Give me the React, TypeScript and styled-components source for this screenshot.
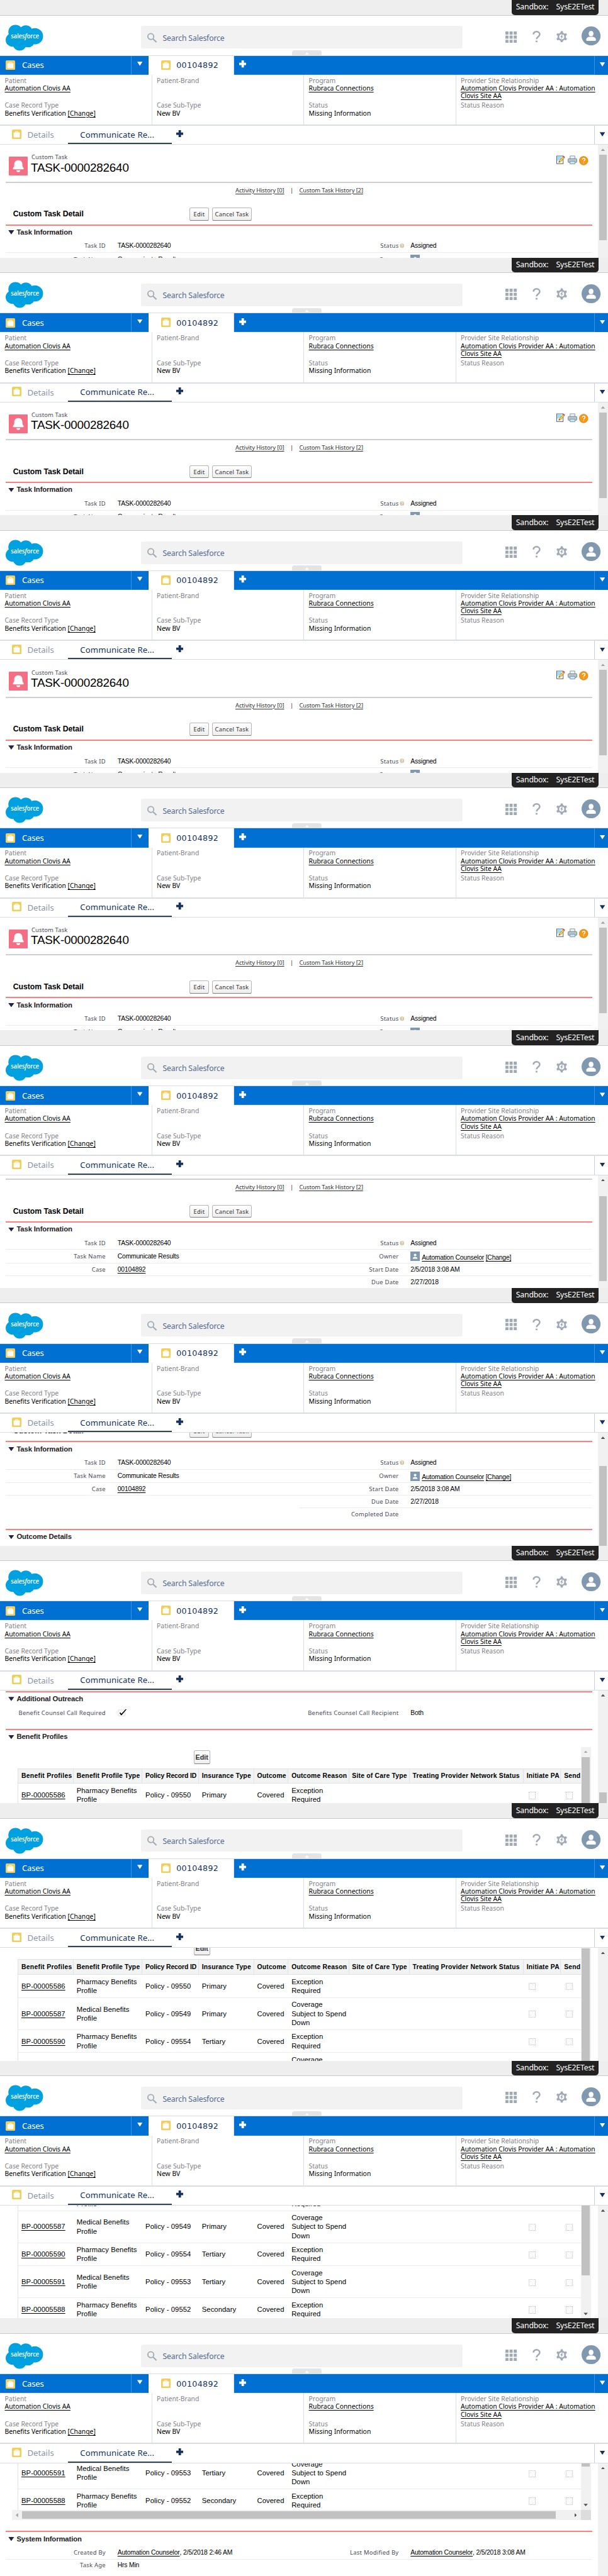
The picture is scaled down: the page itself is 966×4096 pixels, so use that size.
import React from 'react';
import styled, { createGlobalStyle } from 'styled-components';

const noto = '"Noto Sans", "Open Sans", sans-serif';
const arial = '"Liberation Sans", Arial, sans-serif';

const Global = createGlobalStyle`
  html, body { margin: 0; padding: 0; background: #fff; }
  * { box-sizing: border-box; }
`;

const Page = styled.main`
  width: 1024px;
  zoom: 0.94336;
  font-family: ${noto};
  color: #000;
  background: #fff;
`;

const Panel = styled.section`
  display: flex;
  flex-direction: column;
  height: 434.19px;
  overflow: hidden;
`;

/* ---------- sandbox strip ---------- */

const Strip = styled.div`
  flex: none;
  display: flex;
  justify-content: flex-end;
  height: 26px;
  padding-right: 16px;
  background: #eee;
  border-bottom: 1px solid #c9c9c9;
`;

const SandboxBadge = styled.div`
  display: flex;
  align-items: center;
  justify-content: space-between;
  width: 146px;
  height: 25px;
  padding: 0 7px;
  border-radius: 0 0 5px 5px;
  background: #222;
  color: #fff;
  font-size: 13px;
  letter-spacing: -0.2px;
  line-height: 24px;
`;

/* ---------- header ---------- */

const Header = styled.header`
  position: relative;
  flex: none;
  display: flex;
  height: 68px;
  border-bottom: 1px solid #d8dde6;
`;

const Logo = styled.svg`
  width: 64px;
  height: 45px;
  margin: 15px 163px 0 10px;
`;

const SearchBox = styled.div`
  display: flex;
  align-items: center;
  width: 542px;
  height: 38px;
  margin-top: 18px;
  padding: 2px 0 0 10px;
  border-radius: 3px;
  background: #f2f2f2;
  color: #54698d;
  font-size: 13px;
  letter-spacing: -0.16px;
  svg { margin-right: 9px; }
`;

const HeaderIcons = styled.div`
  display: flex;
  align-items: center;
  height: 32px;
  margin: 19px 0 0 72px;
  svg { display: block; }
`;

const IconSlot = styled.span<{ $w: number; $gap: number; $down?: number }>`
  width: ${p => p.$w}px;
  margin-right: ${p => p.$gap}px;
  padding-top: ${p => p.$down ?? 0}px;
`;

const Handle = styled.div`
  position: absolute;
  left: 492px;
  bottom: 0;
  display: flex;
  justify-content: center;
  align-items: center;
  width: 50px;
  height: 8px;
  padding-top: 2px;
  border-radius: 4px 4px 0 0;
  background: #e4e4e4;
`;

/* ---------- tab bars ---------- */

const Triangle = styled.i<{ $dir?: 'up' | 'down' | 'left' | 'right'; $color: string; $w: number; $h: number }>`
  display: block;
  width: ${p => p.$w}px;
  height: ${p => p.$h}px;
  background: ${p => p.$color};
  clip-path: ${p =>
    p.$dir === 'up' ? 'polygon(0 100%, 50% 0, 100% 100%)'
    : p.$dir === 'left' ? 'polygon(100% 0, 0 50%, 100% 100%)'
    : p.$dir === 'right' ? 'polygon(0 0, 100% 50%, 0 100%)'
    : 'polygon(0 0, 100% 0, 50% 100%)'};
`;

const PrimaryBar = styled.nav`
  flex: none;
  display: flex;
  height: 32px;
  background: #0070d2;
`;

const CasesTab = styled.div`
  display: flex;
  align-items: center;
  width: 221px;
  padding-left: 10px;
  border-bottom: 1px solid #1b80e0;
  color: #fff;
  font-size: 14px;
  letter-spacing: -0.2px;
  svg { margin: 1px 11px 0 0; }
`;

const CasesMenu = styled.div`
  width: 29px;
  padding: 10px 0 0 9px;
  border-left: 1px solid #3a92e3;
  border-bottom: 1px solid #1b80e0;
  border-right: 1px solid #005fb2;
`;

const RecordTab = styled.div`
  display: flex;
  align-items: center;
  width: 144px;
  padding-left: 21px;
  border-right: 1px solid #d8dde6;
  background: #fff;
  color: #16325c;
  font-family: "DejaVu Sans", sans-serif;
  font-size: 13.4px;
  letter-spacing: 0.38px;
  svg { margin: -1px 10px 0 0; }
`;

const PrimaryRest = styled.div`
  flex: 1;
  padding: 8px 0 0 9px;
  border-bottom: 1px solid #1b80e0;
  svg { display: block; }
`;

const BarMenu = styled.div<{ $line: string }>`
  width: 23px;
  padding: 11px 0 0 8px;
  border-left: 1px solid ${p => p.$line};
`;

const Highlights = styled.div`
  flex: none;
  display: grid;
  grid-template-columns: repeat(4, 256px);
  height: 86px;
  border-bottom: 2.2px solid #d8dde6;
`;

const HighlightCell = styled.div`
  display: grid;
  grid-template-rows: 42px auto;
  padding: 3px 0 0 8px;
  border-right: 1px solid #d8dde6;
  font-size: 11px;
  line-height: 13px;
  white-space: nowrap;
  &:last-child { border-right: 0; }
`;

const HighlightLabel = styled.div`
  color: #7f8186;
`;

const Link = styled.a`
  color: inherit;
  text-decoration: underline;
  text-underline-offset: 2px;
  text-decoration-thickness: 1px;
`;

const SubBar = styled.nav`
  flex: none;
  display: flex;
  height: 32px;
  border-bottom: 1px solid #d8dde6;
  font-size: 14px;
`;

const DetailsTab = styled.div`
  display: flex;
  align-items: center;
  width: 115px;
  padding: 0 0 1px 20px;
  color: #8a96a6;
  svg { margin: 0 10px 2px 0; }
`;

const TaskTab = styled.div`
  display: flex;
  align-items: center;
  width: 174px;
  padding-left: 20px;
  border-bottom: 2.2px solid #33424f;
  color: #16325c;
  letter-spacing: 0.09px;
`;

const SubRest = styled.div`
  flex: 1;
  padding: 7px 0 0 8px;
  svg { display: block; }
`;

/* ---------- scrolling content ---------- */

const Content = styled.div`
  flex: 1;
  min-height: 0;
  display: flex;
  overflow: hidden;
  font-family: ${arial};
`;

const View = styled.div`
  width: 1007px;
  overflow: hidden;
`;

const Doc = styled.div<{ $shift: number }>`
  margin-top: ${p => p.$shift}px;
  padding: 0 10px;
`;

const ScrollTrack = styled.div`
  width: 17px;
  height: 100%;
  display: flex;
  flex-direction: column;
  align-items: center;
  background: #f1f1f1;
`;

const ArrowBox = styled.div`
  flex: none;
  display: flex;
  align-items: center;
  justify-content: center;
  width: 17px;
  height: 17px;
`;

const Thumb = styled.div<{ $top?: number; $h: number }>`
  flex: none;
  width: 13px;
  height: ${p => p.$h}px;
  margin-top: ${p => p.$top ?? 0}px;
  background: #c1c1c1;
`;

const TitleBar = styled.div`
  display: flex;
  height: 64px;
  padding: 14px 6px 0 5px;
  border-bottom: 2.2px solid #d0d0d0;
`;

const TitleText = styled.div`
  flex: 1;
  padding-left: 5px;
  white-space: nowrap;
`;

const Kind = styled.div`
  padding-left: 1px;
  color: #4a4a56;
  font: 10px/15px ${noto};
  letter-spacing: 0.15px;
`;

const RecordName = styled.h1`
  margin: 0;
  font: 400 20px/20px ${arial};
  letter-spacing: -0.24px;
`;

const BellTile = styled.svg`
  display: block;
  margin-top: 6px;
`;

const PageTools = styled.div`
  display: flex;
  gap: 3px;
  padding-top: 4px;
`;

const HoverLinks = styled.div`
  display: flex;
  justify-content: center;
  gap: 10px;
  height: 26px;
  padding-left: 1px;
  color: #333;
  font: 10px/25px ${noto};
  letter-spacing: -0.13px;
`;

const DetailHead = styled.div`
  display: flex;
  align-items: center;
  height: 44px;
  padding: 10px 0 0 12px;
`;

const DetailTitle = styled.h2`
  width: 297px;
  margin: 0;
  font: 700 13px/16px ${arial};
  letter-spacing: -0.04px;
`;

const Button = styled.button<{ $w: number; $h: number; $bold?: boolean }>`
  width: ${p => p.$w}px;
  height: ${p => p.$h}px;
  margin: 0 5px 0 0;
  padding: 0;
  border: 1px solid #b5b5b5;
  border-bottom-color: #7f7f7f;
  border-radius: 3px;
  background: linear-gradient(#fff, #eee);
  color: #333;
  font: ${p => (p.$bold ? `700 11.5px ${arial}` : `400 10px ${noto}`)};
  letter-spacing: ${p => (p.$bold ? 0 : 0.25)}px;
  white-space: nowrap;
`;

const SectionBox = styled.section<{ $after: number }>`
  padding-bottom: ${p => p.$after}px;
  border-top: 2.2px solid #ff7f7f;
`;

const SectionTitle = styled.h3`
  display: flex;
  align-items: center;
  gap: 4px;
  height: 24px;
  margin: 0;
  padding: 0 0 1px 4px;
  color: #1f2024;
  font: 700 12px/14px ${arial};
  letter-spacing: -0.13px;
`;

const Row = styled.div<{ $h: number }>`
  display: grid;
  grid-template-columns: 1fr 1fr;
  height: ${p => p.$h}px;
`;

const Half = styled.div<{ $line?: boolean }>`
  display: flex;
  align-items: center;
  border-bottom: 1px solid ${p => (p.$line ? '#ececec' : 'transparent')};
`;

const Label = styled.span`
  width: 168px;
  color: #4a4a56;
  font: 10px/14px ${noto};
  letter-spacing: 0.28px;
  text-align: right;
  white-space: nowrap;
`;

const Gap = styled.span`
  width: 20px;
  padding-left: 2px;
  svg { display: block; }
`;

const Value = styled.span`
  display: flex;
  align-items: center;
  font-size: 11px;
  line-height: 14px;
  letter-spacing: -0.2px;
  white-space: pre;
`;

const OwnerText = styled.span`
  padding: 4px 0 0 3px;
`;

/* ---------- benefit profile frame ---------- */

const FrameArea = styled.div`
  padding: 4px 0 0 10px;
`;

const Frame = styled.div`
  width: 975px;
  height: 300px;
`;

const FrameTop = styled.div`
  display: flex;
  height: 283px;
`;

const FrameView = styled.div`
  width: 958px;
  overflow: hidden;
`;

const FrameButtons = styled.div`
  height: 36px;
  padding: 6px 0 0 306px;
`;

const Table = styled.div`
  margin-left: 10px;
  width: 1000px;
  border-left: 1px solid #e0e3e5;
`;

const TableRow = styled.div<{ $head?: boolean; $h: number }>`
  display: grid;
  grid-template-columns: 93px 116px 95px 93px 58px 102px 102px 192px 63px 90px;
  height: ${p => p.$h}px;
  border-bottom: 1px solid ${p => (p.$head ? '#e0e3e5' : '#ececec')};
  border-top: ${p => (p.$head ? '1px solid #e0e3e5' : '0')};
  background: ${p => (p.$head ? '#f2f3f3' : '#fff')};
`;

const HeadCell = styled.div`
  display: flex;
  align-items: center;
  padding-left: 5px;
  border-right: 1px solid #e0e3e5;
  font-weight: 700;
  font-size: 11px;
  letter-spacing: 0.22px;
  white-space: nowrap;
  &:nth-child(1) { letter-spacing: 0.3px; }
  &:nth-child(3) { letter-spacing: -0.08px; }
`;

const Cell = styled.div`
  display: flex;
  align-items: center;
  padding-left: 5px;
  font-size: 12px;
  line-height: 15px;
  letter-spacing: 0.05px;
  white-space: pre-line;
`;

const Unchecked = styled.i`
  width: 12px;
  height: 12px;
  margin: 2px 0 0 3px;
  border: 1px dotted #bbb;
`;

const HTrack = styled.div`
  display: flex;
  align-items: center;
  height: 17px;
  background: #f1f1f1;
`;

const HThumb = styled.div`
  width: 899px;
  height: 13px;
  background: #c1c1c1;
`;

const Corner = styled.div`
  width: 17px;
  height: 17px;
  background: #dcdcdc;
`;

const Grow = styled.div`
  flex: 1;
`;

/* ---------- drawings ---------- */

const Briefcase = () => (
  <svg width="16" height="16" viewBox="0 0 16 16">
    <rect width="16" height="16" rx="2" fill="#f2cf5b" />
    <path d="M5.8 5V3.5h4.400V5" fill="none" stroke="#fff" strokeWidth="1" />
    <rect x="2.800" y="4.800" width="10.400" height="8.400" rx="1" fill="#fff" />
  </svg>
);

const Plus = ({ color }: { color: string }) => (
  <svg width="12" height="12" viewBox="0 0 12 12">
    <path d="M4 0h4v4h4v4H8v4H4V8H0V4h4z" fill={color} />
  </svg>
);

const Cloud = () => (
  <Logo viewBox="0 0 64 45">
    <g fill="#00a1e0">
      <circle cx="16.5" cy="12.5" r="12" />
      <circle cx="34" cy="12.5" r="11.3" />
      <circle cx="49.3" cy="19.8" r="13.7" />
      <circle cx="11.3" cy="26" r="11.3" />
      <circle cx="23.5" cy="32.5" r="11.5" />
      <circle cx="38" cy="27.5" r="11" />
      <rect x="10" y="10" width="38" height="22" />
    </g>
    <text x="32.6" y="23.4" textAnchor="middle" textLength="47.5" lengthAdjust="spacingAndGlyphs" fill="#fff" fontSize="11" fontWeight="600" fontFamily="Open Sans, sans-serif">
      sales<tspan fontStyle="italic">f</tspan>orce
    </text>
  </Logo>
);

const SearchIcon = () => (
  <svg width="18" height="18" viewBox="0 0 18 18" fill="none" stroke="#9faab5">
    <circle cx="7" cy="6.5" r="5" strokeWidth="1.9" />
    <path d="M10.6 10.4L16.5 16" strokeWidth="2.2" />
  </svg>
);

const AppsIcon = () => (
  <svg width="20" height="20" viewBox="0 0 20 20" fill="#9faab5">
    {[0, 7, 14].map(y => [0, 7, 14].map(x => <rect key={`${x}-${y}`} x={x} y={y} width="5.2" height="5.2" rx=".6" />))}
  </svg>
);

const HelpIcon = () => (
  <svg width="14" height="20" viewBox="0 0 14 20" fill="none" stroke="#9faab5" strokeWidth="2.6">
    <path d="M1.6 6.2C1.6 3.2 3.8 1.4 6.9 1.4s5.3 1.9 5.3 4.7c0 3.9-5.3 4.1-5.3 8" />
    <path d="M5.4 18h3" strokeWidth="2.8" />
  </svg>
);

const GearIcon = () => (
  <svg width="18" height="20" viewBox="0 0 18 20">
    <g fill="#9faab5">
      <circle cx="9" cy="10" r="7" />
      {[0, 60, 120, 180, 240, 300].map(a => (
        <path key={a} d="M6.6 4.5L7.4.6h3.2l.8 3.9z" transform={`rotate(${a} 9 10)`} />
      ))}
    </g>
    <circle cx="9" cy="10" r="4.3" fill="#fff" />
    <path d="M9.6 6.2L6.4 10.6h2L7.8 14l3.6-4.7H9.3l1.6-3.1z" fill="#9faab5" />
  </svg>
);

const Avatar = () => (
  <svg width="32" height="32" viewBox="0 0 32 32">
    <circle cx="16" cy="16" r="16" fill="#8199af" />
    <ellipse cx="16" cy="12.3" rx="4" ry="4.5" fill="#fff" />
    <path d="M8 23.5v-2c0-2 2.2-3.2 5-3.9h6c2.8.7 5 1.9 5 3.9v2q0 .8-.8.8H8.8q-.8 0-.8-.8z" fill="#fff" />
  </svg>
);

const Bell = () => (
  <BellTile width="32" height="32" viewBox="0 0 32 32">
    <rect width="32" height="32" rx="1.5" fill="#f46f84" />
    <path d="M16 6c-4.4 0-6.8 3-6.8 7 0 3.5-.4 4.6-1.8 5.8-.9.8-.6 2.6.7 2.6h15.8c1.300 0 1.600-1.800.7-2.600-1.400-1.200-1.800-2.300-1.800-5.800 0-4-2.400-7-6.800-7z" fill="#fff" />
    <path d="M12.8 23h6.400a3.200 3 0 0 1-6.400 0z" fill="#fff" />
  </BellTile>
);

const EditPageIcon = () => (
  <svg width="16" height="16" viewBox="0 0 16 16">
    <rect x=".6" y="1.1" width="10.8" height="13" fill="#fff" stroke="#555" />
    <path d="M1.2 1.7h7v4l-7 4z" fill="#9fdcf5" />
    <path d="M4 11.8l1-3.2L11 2.4l2.3 2.2-6.2 6.300z" fill="#ffc83a" stroke="#7a5a17" strokeWidth=".6" />
    <path d="M11 2.4L12.6.9l2.1 2.2-1.4 1.500z" fill="#c2598a" />
    <path d="M4 11.8l.5-1.7 1.3 1.200z" fill="#222" />
  </svg>
);

const PrinterIcon = () => (
  <svg width="16" height="16" viewBox="0 0 16 16">
    <path d="M4 6V1h8v5" fill="#e8f6fd" stroke="#86919b" />
    <rect x=".6" y="5.5" width="14.8" height="6.5" rx="1.2" fill="#b8c4c6" stroke="#75818a" />
    <path d="M3.8 10h8.4v4.5H3.8z" fill="#bde6fa" stroke="#7e96a5" />
  </svg>
);

const OrangeHelpIcon = () => (
  <svg width="16" height="17" viewBox="0 0 16 17">
    <circle cx="7.7" cy="9" r="7.3" fill="#f29a14" stroke="#c97c12" strokeWidth=".7" />
    <path d="M5.5 7.2c0-3 4.6-2.7 4.6-.2 0 1.9-2.3 1.7-2.3 3.600M7.800 11.800v1.500" fill="none" stroke="#fff" strokeWidth="1.5" />
  </svg>
);

const TinyHelp = () => (
  <svg width="8" height="8" viewBox="0 0 8 8">
    <circle cx="4" cy="4" r="3.7" fill="#d6c7a8" />
    <path d="M2.8 3.2c0-1.7 2.5-1.5 2.5 0C5.3 4.2 4 4 4 5.1M4 5.7v.9" fill="none" stroke="#fff" strokeWidth=".8" />
  </svg>
);

const UserTile = () => (
  <svg width="16" height="16" viewBox="0 0 16 16">
    <rect width="16" height="16" fill="#8199af" />
    <circle cx="8" cy="5.8" r="2.2" fill="#fff" />
    <path d="M4 12.2c0-2.2 1.6-3.2 4-3.2s4 1 4 3.200z" fill="#fff" />
  </svg>
);

const CheckedBox = () => (
  <svg width="16" height="14" viewBox="0 0 16 14">
    <rect x="1" y="2" width="11" height="10" fill="none" stroke="#bbb" strokeDasharray="1 1" />
    <path d="M3 7.2l1.5-1 1.7 2.200L13.500.7l1.500.3-8.400 10H5.500z" fill="#000" />
  </svg>
);

/* ---------- composed parts ---------- */

const Chrome = () => (
  <>
    <Strip>
      <SandboxBadge><span>Sandbox:</span><span>SysE2ETest</span></SandboxBadge>
    </Strip>
    <Header>
      <Cloud />
      <SearchBox><SearchIcon />Search Salesforce</SearchBox>
      <HeaderIcons>
        <IconSlot $w={19} $gap={27} $down={3}><AppsIcon /></IconSlot>
        <IconSlot $w={14} $gap={26} $down={1}><HelpIcon /></IconSlot>
        <IconSlot $w={18} $gap={25} $down={1}><GearIcon /></IconSlot>
        <IconSlot $w={32} $gap={0}><Avatar /></IconSlot>
      </HeaderIcons>
      <Handle><Triangle $dir="up" $color="#fff" $w={7} $h={4} /></Handle>
    </Header>
    <PrimaryBar>
      <CasesTab><Briefcase />Cases</CasesTab>
      <CasesMenu><Triangle $color="#fff" $w={9} $h={7} /></CasesMenu>
      <RecordTab><Briefcase />00104892</RecordTab>
      <PrimaryRest><Plus color="#fff" /></PrimaryRest>
      <BarMenu $line="#3a92e3"><Triangle $color="#fff" $w={9} $h={7} /></BarMenu>
    </PrimaryBar>
    <Highlights>
      <HighlightCell>
        <div><HighlightLabel>Patient</HighlightLabel><Link>Automation Clovis AA</Link></div>
        <div><HighlightLabel>Case Record Type</HighlightLabel>Benefits Verification <Link>[Change]</Link></div>
      </HighlightCell>
      <HighlightCell>
        <div><HighlightLabel>Patient-Brand</HighlightLabel></div>
        <div><HighlightLabel>Case Sub-Type</HighlightLabel>New BV</div>
      </HighlightCell>
      <HighlightCell>
        <div><HighlightLabel>Program</HighlightLabel><Link>Rubraca Connections</Link></div>
        <div><HighlightLabel>Status</HighlightLabel>Missing Information</div>
      </HighlightCell>
      <HighlightCell>
        <div><HighlightLabel>Provider Site Relationship</HighlightLabel><Link>Automation Clovis Provider AA : Automation<br />Clovis Site AA</Link></div>
        <div><HighlightLabel>Status Reason</HighlightLabel></div>
      </HighlightCell>
    </Highlights>
    <SubBar>
      <DetailsTab><Briefcase />Details</DetailsTab>
      <TaskTab>Communicate Re...</TaskTab>
      <SubRest><Plus color="#16325c" /></SubRest>
      <BarMenu $line="#c9ced8"><Triangle $color="#16325c" $w={9} $h={7} /></BarMenu>
    </SubBar>
  </>
);

const Section = ({ title, after = 0, children }: { title: string; after?: number; children?: React.ReactNode }) => (
  <SectionBox $after={after}>
    <SectionTitle><Triangle $color="#23233f" $w={10} $h={7} />{title}</SectionTitle>
    {children}
  </SectionBox>
);

type FieldProps = { label?: string; line?: boolean; mark?: React.ReactNode; children?: React.ReactNode };

const Field = ({ label, line, mark, children }: FieldProps) => (
  <Half $line={line}>
    <Label>{label}</Label>
    <Gap>{mark}</Gap>
    <Value>{children}</Value>
  </Half>
);

const TaskDoc = ({ shift }: { shift: number }) => (
  <Doc $shift={shift}>
    <TitleBar>
      <Bell />
      <TitleText>
        <Kind>Custom Task</Kind>
        <RecordName>TASK-0000282640</RecordName>
      </TitleText>
      <PageTools><EditPageIcon /><PrinterIcon /><OrangeHelpIcon /></PageTools>
    </TitleBar>
    <HoverLinks>
      <Link>Activity History [0]</Link>
      <span>|</span>
      <Link>Custom Task History [2]</Link>
    </HoverLinks>
    <DetailHead>
      <DetailTitle>Custom Task Detail</DetailTitle>
      <Button $w={33} $h={22}>Edit</Button>
      <Button $w={67} $h={22}>Cancel Task</Button>
    </DetailHead>
    <Section title="Task Information" after={14}>
      <Row $h={22}>
        <Field line label="Task ID">TASK-0000282640</Field>
        <Field line label="Status" mark={<TinyHelp />}>Assigned</Field>
      </Row>
      <Row $h={23}>
        <Field line label="Task Name">Communicate Results</Field>
        <Field line label="Owner"><UserTile /><OwnerText><Link>Automation Counselor</Link> <Link>[Change]</Link></OwnerText></Field>
      </Row>
      <Row $h={21}>
        <Field line label="Case"><Link>00104892</Link></Field>
        <Field line label="Start Date">2/5/2018 3:08 AM</Field>
      </Row>
      <Row $h={21}>
        <Field />
        <Field line label="Due Date">2/27/2018</Field>
      </Row>
      <Row $h={21}>
        <Field />
        <Field label="Completed Date" />
      </Row>
    </Section>
    <Section title="Outcome Details" />
  </Doc>
);

const exception = 'Exception\nRequired';
const spendDown = 'Coverage\nSubject to Spend\nDown';
const pharmacy = 'Pharmacy Benefits\nProfile';
const medical = 'Medical Benefits\nProfile';

const profiles = [
  { id: 'BP-00005586', type: pharmacy, policy: 'Policy - 09550', ins: 'Primary', reason: exception },
  { id: 'BP-00005587', type: medical, policy: 'Policy - 09549', ins: 'Primary', reason: spendDown },
  { id: 'BP-00005590', type: pharmacy, policy: 'Policy - 09554', ins: 'Tertiary', reason: exception },
  { id: 'BP-00005591', type: medical, policy: 'Policy - 09553', ins: 'Tertiary', reason: spendDown },
  { id: 'BP-00005588', type: pharmacy, policy: 'Policy - 09552', ins: 'Secondary', reason: exception },
];

const columns = [
  'Benefit Profiles', 'Benefit Profile Type', 'Policy Record ID', 'Insurance Type', 'Outcome',
  'Outcome Reason', 'Site of Care Type', 'Treating Provider Network Status', 'Initiate PA', 'Send',
];

const OutreachDoc = ({ shift }: { shift: number }) => (
  <Doc $shift={shift}>
    <Section title="Additional Outreach" after={16}>
      <Row $h={22}>
        <Field label="Benefit Counsel Call Required">{' '}<CheckedBox /></Field>
        <Field label="Benefits Counsel Call Recipient">Both</Field>
      </Row>
    </Section>
    <Section title="Benefit Profiles" after={18}>
      <FrameArea>
        <Frame>
          <FrameTop>
            <FrameView>
              <FrameButtons><Button $w={28} $h={23} $bold>Edit</Button></FrameButtons>
              <Table>
                <TableRow $head $h={26}>{columns.map(c => <HeadCell key={c}>{c}</HeadCell>)}</TableRow>
                {profiles.map(p => (
                  <TableRow key={p.id} $h={p.reason === exception ? 39 : 54}>
                    <Cell><Link>{p.id}</Link></Cell>
                    <Cell>{p.type}</Cell>
                    <Cell>{p.policy}</Cell>
                    <Cell>{p.ins}</Cell>
                    <Cell>Covered</Cell>
                    <Cell>{p.reason}</Cell>
                    <Cell />
                    <Cell />
                    <Cell><Unchecked /></Cell>
                    <Cell><Unchecked /></Cell>
                  </TableRow>
                ))}
              </Table>
            </FrameView>
            <ScrollTrack>
              <ArrowBox><Triangle $dir="up" $color="#a3a3a3" $w={7} $h={4} /></ArrowBox>
              <Thumb $h={193} />
              <Grow />
              <ArrowBox><Triangle $color="#505050" $w={7} $h={4} /></ArrowBox>
            </ScrollTrack>
          </FrameTop>
          <HTrack>
            <ArrowBox><Triangle $dir="left" $color="#a3a3a3" $w={4} $h={7} /></ArrowBox>
            <HThumb />
            <Grow />
            <ArrowBox><Triangle $dir="right" $color="#505050" $w={4} $h={7} /></ArrowBox>
            <Corner />
          </HTrack>
        </Frame>
      </FrameArea>
    </Section>
    <Section title="System Information">
      <Row $h={22}>
        <Field line label="Created By"><Link>Automation Counselor</Link>, 2/5/2018 2:46 AM</Field>
        <Field line label="Last Modified By"><Link>Automation Counselor</Link>, 2/5/2018 3:08 AM</Field>
      </Row>
      <Row $h={21}>
        <Field label="Task Age">Hrs Min</Field>
        <Field />
      </Row>
    </Section>
  </Doc>
);

type Shot = { doc: 'task' | 'outreach'; shift: number; thumb?: [number, number] };

const shots: Shot[] = [
  { doc: 'task', shift: 0, thumb: [0, 144] },
  { doc: 'task', shift: 0, thumb: [0, 144] },
  { doc: 'task', shift: 0, thumb: [0, 144] },
  { doc: 'task', shift: 0, thumb: [0, 144] },
  { doc: 'task', shift: -56, thumb: [18, 144] },
  { doc: 'task', shift: -120, thumb: [39, 144] },
  { doc: 'outreach', shift: 1, thumb: [155, 30] },
  { doc: 'outreach', shift: -111 },
  { doc: 'outreach', shift: -186 },
  { doc: 'outreach', shift: -298 },
];

export default function App() {
  return (
    <>
      <Global />
      <Page>
        {shots.map((s, i) => (
          <Panel key={i}>
            <Chrome />
            <Content>
              <View>{s.doc === 'task' ? <TaskDoc shift={s.shift} /> : <OutreachDoc shift={s.shift} />}</View>
              <ScrollTrack>
                <ArrowBox><Triangle $dir="up" $color={i < 4 ? '#a3a3a3' : '#505050'} $w={7} $h={4} /></ArrowBox>
                {s.thumb && <Thumb $top={s.thumb[0]} $h={s.thumb[1]} />}
              </ScrollTrack>
            </Content>
          </Panel>
        ))}
      </Page>
    </>
  );
}
